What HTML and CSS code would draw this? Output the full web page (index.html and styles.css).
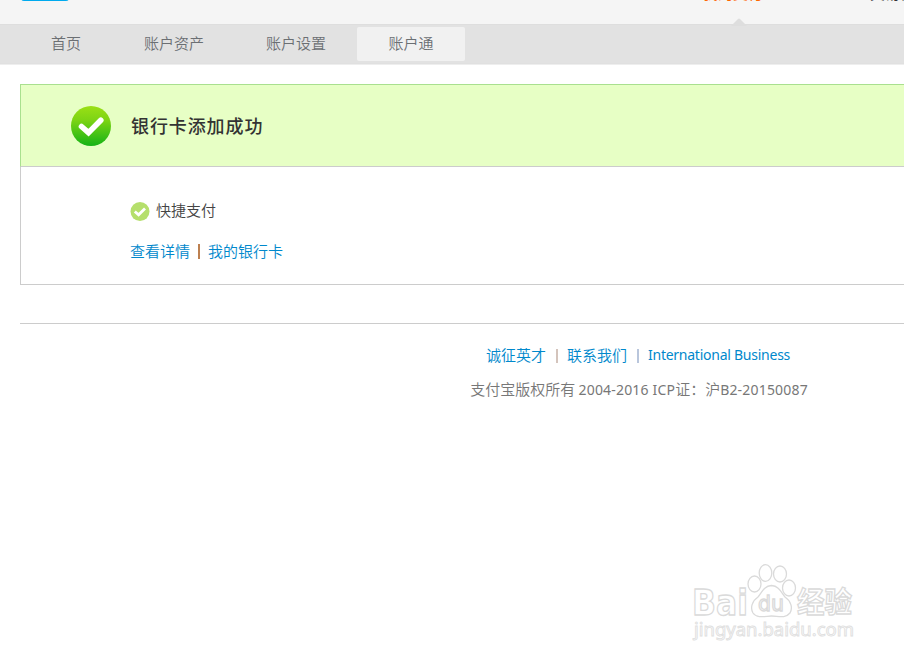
FILE: index.html
```
<!DOCTYPE html>
<html lang="zh-CN">
<head>
    <meta charset="UTF-8">
    <title>银行卡添加成功</title>
    <link rel="stylesheet" href="styles.css">
</head>
<body>
    <div class="page">
        <div class="header">
            <div class="logo"></div>
            <a class="main-link current">我的支付宝</a>
            <a class="main-link">交易记录</a>
        </div>

        <div class="nav">
            <svg class="nav-arrow" width="18" height="8" viewBox="0 0 18 8">
                <path d="M1 8 L8 1 Q9 0 10 1 L17 8 Z" fill="#dedede"/>
            </svg>
            <a class="nav-item home">首页</a>
            <a class="nav-item">账户资产</a>
            <a class="nav-item">账户设置</a>
            <a class="nav-item active">账户通</a>
        </div>

        <div class="result">
            <div class="result-title">
                <svg class="icon-big" width="40" height="40" viewBox="0 0 40 40">
                    <defs>
                        <linearGradient id="green" x1="0" y1="0" x2="0" y2="1">
                            <stop offset="0" stop-color="#9be015"/>
                            <stop offset="0.35" stop-color="#7dd414"/>
                            <stop offset="1" stop-color="#15b317"/>
                        </linearGradient>
                    </defs>
                    <circle cx="20" cy="20" r="20" fill="url(#green)"/>
                    <path d="M10.500 20.500 L17.500 26.700 L29.800 14.300" fill="none" stroke="#fff" stroke-width="5.6" stroke-linecap="round"/>
                </svg>
                <h3>银行卡添加成功</h3>
            </div>
            <div class="result-body">
                <div class="pay">
                    <svg width="20" height="20" viewBox="0 0 20 20">
                        <circle cx="10" cy="10.500" r="9.500" fill="#b5df6c"/>
                        <path d="M4.800 10.500 L8.600 13.800 L15 7.600" fill="none" stroke="#fff" stroke-width="2.8"/>
                    </svg>
                    <span>快捷支付</span>
                </div>
                <div class="links">
                    <a>查看详情</a><i class="bar"></i><a>我的银行卡</a>
                </div>
            </div>
        </div>

        <div class="footer">
            <div class="footer-links">
                <a>诚征英才</a><i class="sep"></i><a>联系我们</a><i class="sep blue"></i><a class="en">International Business</a>
            </div>
            <div class="copyright">支付宝版权所有 <span class="num">2004-2016 ICP</span>证：沪<span class="num">B2-20150087</span></div>
        </div>
    </div>

    <svg class="watermark" width="170" height="84" viewBox="0 0 170 84">
        <g fill="#fff" stroke="#dadada" stroke-width="1.3">
            <text class="wm-logo" x="0" y="56" textLength="56" lengthAdjust="spacingAndGlyphs">Bai</text>
            <text class="wm-cn" x="105" y="54" textLength="55" lengthAdjust="spacingAndGlyphs">经验</text>
            <ellipse cx="62.500" cy="25" rx="6.500" ry="8"/>
            <ellipse cx="73.500" cy="14" rx="6.300" ry="8.400"/>
            <ellipse cx="88" cy="15" rx="6.500" ry="8"/>
            <ellipse cx="97" cy="29" rx="6.500" ry="8"/>
            <path d="M79.500 26.500 C72 27 70 33 66 38 C60 42 58 49 61 54 C65 60 74 57 79.500 57 C86 57 93 60 98 54 C101 49 99 42 93 38 C89 33 87 27 79.500 26.500 Z"/>
            <text class="wm-du" x="66" y="52" textLength="26" lengthAdjust="spacingAndGlyphs">du</text>
        </g>
        <text class="wm-url" x="2" y="77" textLength="160" lengthAdjust="spacingAndGlyphs">jingyan.baidu.com</text>
    </svg>
</body>
</html>
```
FILE: styles.css
```
html {
    overflow: hidden;
}
body {
    margin: 0;
    height: 661px;
    overflow: hidden;
    background: #fff;
    font-family: "Noto Sans CJK SC", sans-serif;
    font-size: 15px;
    font-weight: 350;
    line-height: 20px;
    color: #444;
}
.page {
    width: 1278px;
}
a {
    color: #0088cc;
    text-decoration: none;
}

/* top strip, scrolled almost out of view */
.header {
    display: flex;
    align-items: flex-end;
    height: 24px;
    overflow: hidden;
    background: #f5f5f5;
}
.logo {
    width: 48px;
    height: 20px;
    margin: 0 631px 23px 21px;
    flex: none;
    border-radius: 3px;
    background: #00aaee;
}
.main-link {
    flex: none;
    margin: 0 0 21px 3px;
    color: #333;
    font-weight: 400;
}
.main-link + .main-link {
    margin-left: 92px;
}
.main-link.current {
    color: #ff6600;
}

.nav {
    position: relative;
    display: flex;
    height: 40px;
    box-sizing: border-box;
    padding: 3px 0 0 20px;
    background: #e2e2e2;
    border-top: 1px solid #dedede;
    border-bottom: 1px solid #e0e0e0;
    box-shadow: 0 1px 0 #eee;
}
.nav-arrow {
    position: absolute;
    left: 730px;
    top: -7px;
}
.nav-item {
    width: 108px;
    height: 34px;
    margin: -1px 7px 0;
    line-height: 31px;
    text-align: center;
    color: #6b6f73;
    border-radius: 2px;
}
.nav-item.home {
    width: 92px;
    margin: -1px 1px 0 0;
}
.nav-item.active {
    margin-left: 0;
    background: #f1f1f1;
}

.result {
    margin: 20px 0 0 20px;
    border: 1px solid #ccc;
    border-top: none;
}
.result-title {
    display: flex;
    align-items: center;
    height: 81px;
    margin-left: -1px;
    padding-left: 50px;
    background: #e7ffc5;
    border: 1px solid #a9e08f;
    border-bottom-color: #ccc;
}
.result-title h3 {
    margin: 0 0 2px 20px;
    font-size: 18px;
    letter-spacing: 0.9px;
    font-weight: 500;
    color: #333;
}
.result-body {
    height: 85px;
    padding: 32px 0 0 109px;
}
.pay {
    display: flex;
    align-items: center;
    gap: 6px;
    height: 24px;
}
.pay span {
    margin-top: -3px;
}
.links {
    display: flex;
    align-items: center;
    margin-top: 18px;
}
.bar {
    width: 2px;
    height: 15px;
    margin: 1px 8px 0;
    background: #bd8050;
}

.footer {
    margin: 38px 20px 0;
    padding-top: 21px;
    border-top: 1px solid #ccc;
    color: #777;
}
.footer-links {
    display: flex;
    align-items: center;
    justify-content: center;
    padding-right: 2px;
}
.sep {
    width: 2px;
    height: 14px;
    margin: 2px 9px 0 10px;
    background: #d4c4bc;
}
.sep.blue {
    background: #b9c6dc;
}
.en, .num {
    font-family: "Noto Sans", sans-serif;
    font-size: 14px;
    font-weight: 400;
}
.en {
    letter-spacing: -0.25px;
}
.num {
    letter-spacing: 0.18px;
}
.copyright {
    margin-top: 14px;
    text-align: center;
}

.watermark {
    position: absolute;
    left: 692px;
    top: 559px;
}
.watermark text {
    font-family: "DejaVu Sans", "Noto Sans CJK SC", sans-serif;
    font-weight: bold;
}
.watermark .wm-logo {
    font-size: 36px;
}
.watermark .wm-cn {
    font-family: "Noto Sans CJK SC", sans-serif;
    font-size: 29px;
}
.watermark .wm-du {
    font-size: 21px;
    font-weight: normal;
}
.watermark .wm-url {
    font-family: "Noto Sans", sans-serif;
    font-size: 18px;
    font-weight: normal;
    fill: #fff;
    stroke: #e0e0e0;
    stroke-width: 0.9px;
}
```
